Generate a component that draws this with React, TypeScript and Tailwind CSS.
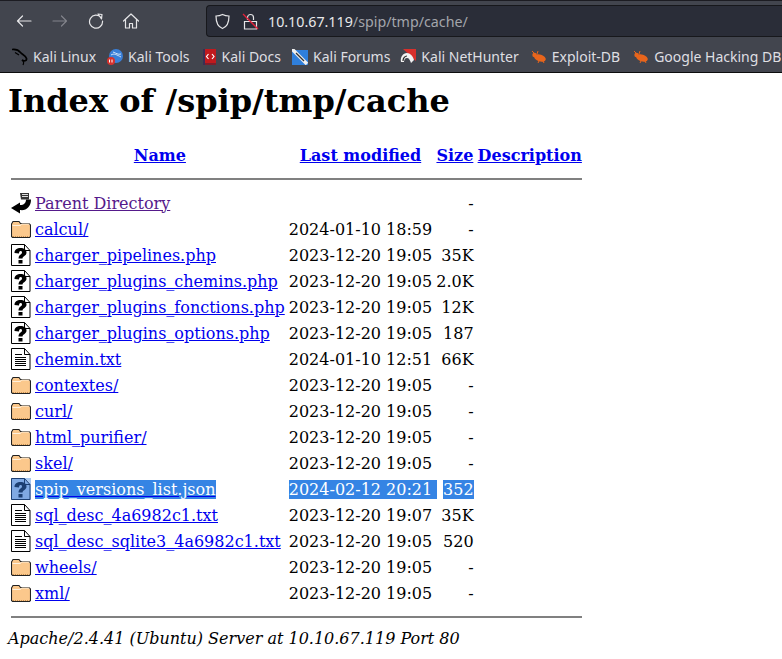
import React from 'react';

type Kind = 'folder' | 'unknown' | 'text';
type Row = { kind: Kind; name: string; date: string; size: string; selected?: boolean };

const rows: Row[] = [
  { kind: 'folder', name: 'calcul/', date: '2024-01-10 18:59', size: '-' },
  { kind: 'unknown', name: 'charger_pipelines.php', date: '2023-12-20 19:05', size: '35K' },
  { kind: 'unknown', name: 'charger_plugins_chemins.php', date: '2023-12-20 19:05', size: '2.0K' },
  { kind: 'unknown', name: 'charger_plugins_fonctions.php', date: '2023-12-20 19:05', size: '12K' },
  { kind: 'unknown', name: 'charger_plugins_options.php', date: '2023-12-20 19:05', size: '187' },
  { kind: 'text', name: 'chemin.txt', date: '2024-01-10 12:51', size: '66K' },
  { kind: 'folder', name: 'contextes/', date: '2023-12-20 19:05', size: '-' },
  { kind: 'folder', name: 'curl/', date: '2023-12-20 19:05', size: '-' },
  { kind: 'folder', name: 'html_purifier/', date: '2023-12-20 19:05', size: '-' },
  { kind: 'folder', name: 'skel/', date: '2023-12-20 19:05', size: '-' },
  { kind: 'unknown', name: 'spip_versions_list.json', date: '2024-02-12 20:21', size: '352', selected: true },
  { kind: 'text', name: 'sql_desc_4a6982c1.txt', date: '2023-12-20 19:07', size: '35K' },
  { kind: 'text', name: 'sql_desc_sqlite3_4a6982c1.txt', date: '2023-12-20 19:05', size: '520' },
  { kind: 'folder', name: 'wheels/', date: '2023-12-20 19:05', size: '-' },
  { kind: 'folder', name: 'xml/', date: '2023-12-20 19:05', size: '-' },
];

const bookmarks = [
  { name: 'Kali Linux', icon: 'dragon', offset: 'ml-0' },
  { name: 'Kali Tools', icon: 'tools', offset: 'ml-0' },
  { name: 'Kali Docs', icon: 'docs', offset: 'ml-[2px]' },
  { name: 'Kali Forums', icon: 'forums', offset: 'ml-0' },
  { name: 'Kali NetHunter', icon: 'hunter', offset: 'ml-[-1px]' },
  { name: 'Exploit-DB', icon: 'bug', offset: 'ml-[1px]' },
  { name: 'Google Hacking DB', icon: 'bug', offset: 'ml-[2px]' },
];

function BookmarkIcon({ icon }: { icon: string }) {
  if (icon === 'dragon') {
    return (
      <svg width="16" height="18" viewBox="0 0 16 18" fill="none" stroke="#000" strokeWidth="1.7">
        <path d="M0 1.500c4-.5 6.500.5 8.500 3 1.500 2 5 3 6 6 .5 2.500-2.500 3-4.500 1.500" />
        <path d="M3 4.500l4 2.500M10 12c1.500 1 2 3 1 5" strokeWidth="1.200" />
      </svg>
    );
  }
  if (icon === 'tools') {
    return (
      <svg width="16" height="16" viewBox="0 0 16 16">
        <circle cx="9" cy="7" r="7" fill="#3a7fd8" />
        <path d="M4 6c3-2 6 0 10 2M6 3c3 1 5 3 8 2" stroke="#cfe2f8" strokeWidth="1" fill="none" />
        <circle cx="4" cy="12" r="4" fill="#d8322e" />
        <path d="M2.500 10.500v3M5 10.500v3" stroke="#fff" strokeWidth="1" />
      </svg>
    );
  }
  if (icon === 'docs') {
    return (
      <svg width="14" height="16" viewBox="0 0 14 16">
        <rect x="0" y="0" width="13" height="16" fill="#c01a1e" />
        <rect x="0" y="0" width="2" height="16" fill="#3a2f55" />
        <rect x="2" y="14" width="11" height="2" fill="#7c1f2c" />
        <path d="M5.500 5 3.500 7.500l2 2.500M9 5l2 2.500-2 2.500" stroke="#fff" strokeWidth="1.200" fill="none" />
      </svg>
    );
  }
  if (icon === 'forums') {
    return (
      <svg width="16" height="16" viewBox="0 0 16 16">
        <rect x="0" y="1" width="16" height="15" fill="#2f7fdc" />
        <path d="M0 0 15 15" stroke="#f0f0f0" strokeWidth="3.500" />
        <path d="M4 4l8 8" stroke="#333" strokeWidth="1.200" />
      </svg>
    );
  }
  if (icon === 'hunter') {
    return (
      <svg width="16" height="16" viewBox="0 0 16 16">
        <path d="M3 0h13v12z" fill="#d8302c" />
        <path d="M1 13c-1-5 2-9 6-9 3 0 6 3 7 7l-3 3c-1-3-2-5-4-5-2 0-3 2-3 4z" fill="#f2f2f2" />
        <path d="M3 12c0-3 2-5 4-5" stroke="#222" strokeWidth="1.200" fill="none" />
      </svg>
    );
  }
  return (
    <svg width="16" height="14" viewBox="0 0 16 14">
      <ellipse cx="9" cy="8" rx="6" ry="3.500" fill="#e8651c" transform="rotate(18 9 8)" />
      <circle cx="3.500" cy="5" r="2.200" fill="#e8651c" />
      <path d="M3 3 1 1M6 4l1-3M8 11l-1 2M12 11l1 2" stroke="#e8651c" strokeWidth="1" />
    </svg>
  );
}

function FileIcon({ kind, selected }: { kind: Kind | 'back'; selected?: boolean }) {
  if (kind === 'back') {
    return (
      <svg width="20" height="22" viewBox="0 0 20 22" className="block">
        <path d="M0 16 9 10.500V13c4 0 6-2 6-5.500h5C20 15 15 19 9 18v3.500z" fill="#000" />
        <path d="M9 1h9v6.500H10z" fill="#333" />
        <path d="M11 2.500h6M11 4.500h6" stroke="#ddd" strokeWidth="1" />
      </svg>
    );
  }
  if (kind === 'folder') {
    return (
      <svg width="20" height="22" viewBox="0 0 20 22" className="block">
        <path
          d="M.5 6 2 3.500h6l1.500 2h8.500l1.500 1.500v11.500l-1 1H1.500l-1-1z"
          fill="#fbc88c"
          stroke="#222"
          strokeWidth="1.100"
        />
        <path d="M1.500 7.500h8l1-1.500h8" fill="none" stroke="#fff0dc" strokeWidth="1" />
        <path d="M2 18.500h16" stroke="#c98f4f" strokeWidth="1" strokeDasharray="1 1" />
      </svg>
    );
  }
  const paper = selected ? '#7fa9e4' : '#ffffff';
  const ink = selected ? '#1c3f73' : '#000000';
  return (
    <svg width="20" height="22" viewBox="0 0 20 22" className={selected ? 'block bg-[#a9c8f0]' : 'block'}>
      <path d="M.5.500h13l5.500 6v15H.500z" fill={paper} stroke={ink} strokeWidth="1" />
      <path d="M13.500.500v6h5.500" fill="none" stroke={ink} strokeWidth="1" />
      {kind === 'text' ? (
        <path d="M4 6.500h7M4 9.500h11M4 11.500h11M4 13.500h11M4 15.500h11M4 17.500h11" stroke={ink} strokeWidth="1" />
      ) : (
        <>
          <path
            d="M3.500 9c0-3.500 2.500-5 6-5s6 1.500 6 4.500c0 3.500-4 3.500-4 6h-4c0-4 3.500-4 3.500-6 0-1-.5-1.500-1.500-1.500S8 8 8 9.500z"
            fill={ink}
          />
          <rect x="7.500" y="16" width="4" height="3.500" fill={ink} />
        </>
      )}
    </svg>
  );
}

function ToolbarIcon({ d, className }: { d: string; className?: string }) {
  return (
    <svg width="16" height="16" viewBox="0 0 16 16" fill="none" stroke="currentColor" strokeWidth="1.200" className={className}>
      <path d="M8 8" />
      <path d={d} strokeLinejoin="round" strokeLinecap="round" />
    </svg>
  );
}

export default function App() {
  return (
    <div className="min-h-screen w-[782px] overflow-hidden bg-white font-['DejaVu_Serif',serif] text-[16px] leading-[19px] text-black">
      {/* Browser chrome */}
      <header className="h-[73px] border-b border-[#0c0c0d] border-t border-t-[#1c1c22] bg-[#42454e] font-['Noto_Sans',sans-serif]">
        <div className="flex h-[39px] items-center pt-[1px]">
          <div className="flex w-[206px] items-center gap-[20px] pl-[16px] text-[#e6e6e8]">
            <ToolbarIcon d="M1.500 8h13.500M6.500 3 1.500 8l5 5" />
            <ToolbarIcon d="M14.500 8H1M9.500 3l5 5-5 5" className="text-[#82848b]" />
            <ToolbarIcon d="M13 4.500A6.500 6.500 0 1 0 14.500 8M10 1l4 .5L13.500 6z" />
            <ToolbarIcon d="M.5 8 8 1l7.500 7M2.500 6.500V15h4v-4.500h3V15h4V6.500" className="ml-[-1px]" />
          </div>
          <div className="flex h-[32px] flex-1 items-center gap-[12px] rounded-l-[4px] border border-r-0 border-[#17181c] bg-[#2a2d38] pl-[7px] text-[14.25px]">
            <svg width="17" height="17" viewBox="0 0 17 17" fill="none" stroke="#e6e6e8" strokeWidth="1.200">
              <path d="M8.500 1.500c2 1 4 1.500 6.500 1.500 0 6-1 10.500-6.500 12.500C3 13.500 2 9 2 3c2.500 0 4.500-.5 6.500-1.500z" />
            </svg>
            <svg width="15" height="17" viewBox="0 0 15 17" fill="none" className="overflow-visible">
              <path d="M4.500 7V4.500a3 3 0 0 1 6 0V7M1.500 8.500h12V16h-12z" stroke="#e6e6e8" strokeWidth="1.200" />
              <path d="M0 1l15 15" stroke="#e5203a" strokeWidth="1.300" />
            </svg>
            <div className="ml-[-2px] text-[#e8e8ea]">
              10.10.67.119<span className="text-[#a3a5ab]">/spip/tmp/cache/</span>
            </div>
          </div>
        </div>
        <div className="flex h-[33px] items-center gap-[11px] whitespace-nowrap pl-[12px] text-[14px] text-[#dfdfe2]">
          {bookmarks.map((b) => (
            <div key={b.name} className={`flex items-center gap-[5px] ${b.offset}`}>
              <BookmarkIcon icon={b.icon} />
              <span>{b.name}</span>
            </div>
          ))}
        </div>
      </header>

      {/* Directory listing */}
      <main className="px-[8px]">
        <h1 className="mt-[9px] mb-[21px] text-[32px] font-bold leading-[38px]">Index of /spip/tmp/cache</h1>
        <table className="border-separate border-spacing-[2px]">
          <thead>
            <tr className="h-[24px]">
              <th className="w-[22px] p-[1px]" />
              <th className="p-[1px] text-[#0000ee] underline">Name</th>
              <th className="p-[1px] text-[#0000ee] underline">Last modified</th>
              <th className="p-[1px] text-[#0000ee] underline">Size</th>
              <th className="p-[1px] text-[#0000ee] underline">Description</th>
            </tr>
            <tr>
              <th colSpan={5} className="p-[1px]">
                <div className="my-[8px] h-[2px] bg-[#808080]" />
              </th>
            </tr>
          </thead>
          <tbody>
            <tr>
              <td className="p-[1px]">
                <FileIcon kind="back" />
              </td>
              <td className="p-[1px] text-[#551a8b] underline">Parent Directory</td>
              <td className="p-[1px]" />
              <td className="p-[1px] text-right">-</td>
              <td className="p-[1px]" />
            </tr>
            {rows.map((r) => (
              <tr key={r.name}>
                <td className="p-[1px]">
                  <FileIcon kind={r.kind} selected={r.selected} />
                </td>
                <td className="p-[1px]">
                  <span
                    className={
                      r.selected
                        ? 'bg-[#3584e4] text-white underline decoration-[#0000ee]'
                        : 'text-[#0000ee] underline'
                    }>
                    {r.name}
                  </span>
                </td>
                <td className="p-[1px]">
                  <span className={r.selected ? 'mr-[-5px] bg-[#3584e4] pr-[5px] text-white' : ''}>{r.date}</span>
                </td>
                <td className="p-[1px] text-right">
                  <span className={r.selected ? 'bg-[#3584e4] text-white' : ''}>{r.size}</span>
                </td>
                <td className="p-[1px]" />
              </tr>
            ))}
            <tr>
              <th colSpan={5} className="p-[1px]">
                <div className="my-[8px] h-[2px] bg-[#808080]" />
              </th>
            </tr>
          </tbody>
        </table>
        <address className="italic">Apache/2.4.41 (Ubuntu) Server at 10.10.67.119 Port 80</address>
      </main>
    </div>
  );
}
